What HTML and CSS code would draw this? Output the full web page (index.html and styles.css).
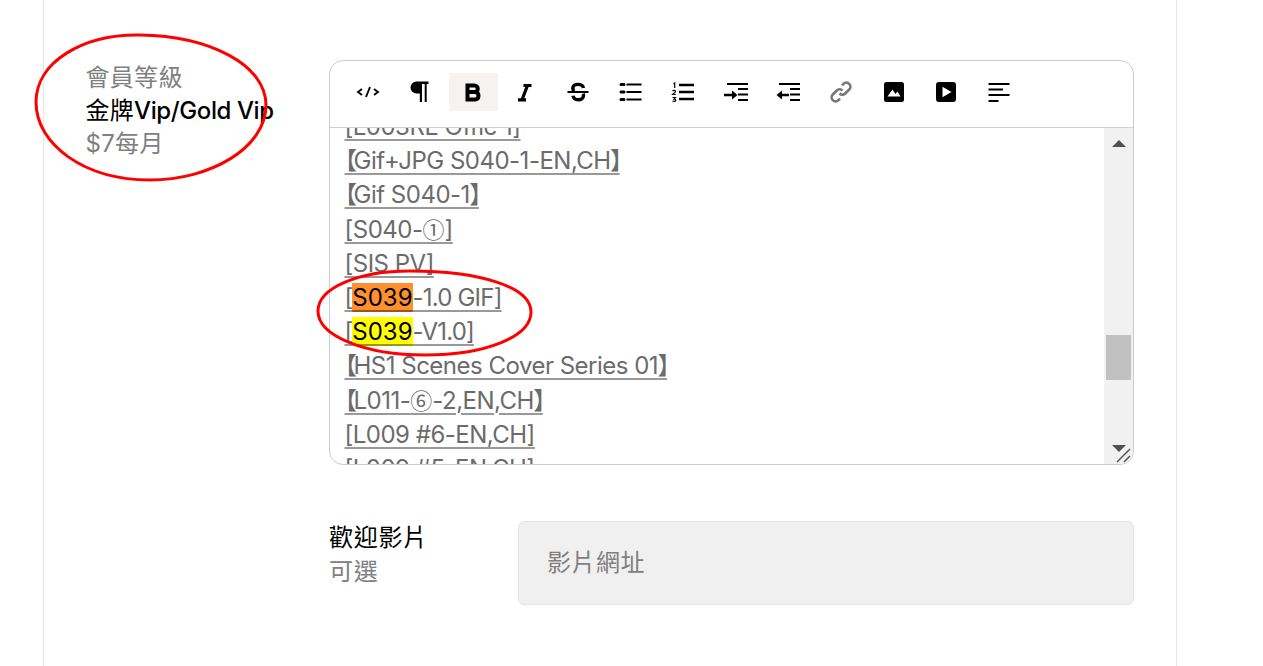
FILE: index.html
```html
<!DOCTYPE html>
<html lang="zh-Hant">
<head>
<meta charset="utf-8">
<title>會員等級</title>
<link rel="stylesheet" href="styles.css">
</head>
<body>
<main class="panel">
  <section class="tier-row">
    <div class="tier">
      <div class="muted">會員等級</div>
      <div class="strong">金牌<span class="latin">Vip/Gold Vip</span></div>
      <div class="muted">$7每月</div>
    </div>
    <div class="fields">
      <div class="editor">
        <div class="toolbar">
          <button class="tool"><svg viewBox="0 0 24 24" class="sk"><path d="M6 9l-4 3 4 3M18 9l4 3-4 3M14 7l-4 10" stroke-width="1.9"/></svg></button>
          <button class="tool"><svg viewBox="0 0 24 24" class="fl"><path d="M8.500 1.500H20.500V4H18.700V22H16.700V4H14V22H11.800V13.500H8.500A6 6 0 0 1 8.500 1.500Z"/></svg></button>
          <button class="tool active"><svg viewBox="0 0 24 24" class="sk"><path d="M6.500 5.500h7a3.200 3.200 0 0 1 0 6.500H6.500zM6.500 12h7.800a3.800 3.800 0 0 1 0 7.500H6.500z" stroke-width="4"/></svg></button>
          <button class="tool"><svg viewBox="0 0 24 24" class="sk"><path d="M10.500 5.500h8M5 19.800h8M14.500 5.500L9 19.800" stroke-width="3.200"/></svg></button>
          <button class="tool"><svg viewBox="0 0 24 24" class="sk"><path d="M1.500 12h21" stroke-width="2.200"/><path d="M17.500 8C17 5.600 14.800 4.400 12 4.400 8.800 4.400 6.800 6 6.800 8.200c0 1.400.6 2.400 1.500 3M7 15.800c.4 2.500 2.500 4 5.200 4 3.200 0 5.300-1.700 5.300-4.200 0-.7-.1-1.200-.4-1.800" stroke-width="3.400"/></svg></button>
          <button class="tool"><svg viewBox="0 0 24 24" class="sk"><path d="M7.500 4.500h15M7.500 12h15M7.500 19.500h15" stroke-width="2.200"/><path d="M2 4.500h3M2 12h3M2 19.500h3" stroke-width="3" stroke-linecap="round"/></svg></button>
          <button class="tool"><svg viewBox="0 0 24 24" class="sk"><path d="M8 5h15M8 12h15M8 19h15" stroke-width="2.400"/><path d="M2.500 4l1.200-1v5M1.500 11c1-1 3-.6 3 .5 0 1-2 1.800-3 3h3.200M1.500 17.500h3l-1.500 1.700c1.500 0 1.800.8 1.800 1.300 0 1.200-2.500 1.200-3.300.4" stroke-width="1.200"/></svg></button>
          <button class="tool"><svg viewBox="0 0 24 24" class="sk"><path d="M3 4h21M14 9h10M14 14.500h10M14 20h10" stroke-width="2.100"/><path d="M0 15h9" stroke-width="2.400"/><path class="fl" d="M8 10.500L13.500 15 8 19.500Z" stroke="none"/></svg></button>
          <button class="tool"><svg viewBox="0 0 24 24" class="sk"><path d="M3 4h21M14 9h10M14 14.500h10M14 20h10" stroke-width="2.100"/><path d="M5 15h8" stroke-width="2.400"/><path class="fl" d="M6 10.500L.5 15 6 19.500Z" stroke="none"/></svg></button>
          <button class="tool"><svg viewBox="0 0 24 24" class="sk link"><path d="M10.500 13.500a4 4 0 0 0 5.700 0l4-4a4 4 0 0 0-5.700-5.700l-1.500 1.500M13.500 10.500a4 4 0 0 0-5.700 0l-4 4a4 4 0 0 0 5.700 5.700l1.500-1.500" stroke-width="2.600"/></svg></button>
          <button class="tool"><svg viewBox="0 0 24 24" class="fl"><path fill-rule="evenodd" d="M4.500 2h15A2.500 2.500 0 0 1 22 4.500v15a2.500 2.500 0 0 1-2.500 2.500h-15A2.500 2.500 0 0 1 2 19.500v-15A2.500 2.500 0 0 1 4.500 2ZM5.500 16.500H18.500L15.500 11.500 13.500 14 10.500 9.500Z"/></svg></button>
          <button class="tool"><svg viewBox="0 0 24 24" class="fl"><path fill-rule="evenodd" d="M5 2h14a3 3 0 0 1 3 3v14a3 3 0 0 1-3 3H5a3 3 0 0 1-3-3V5a3 3 0 0 1 3-3ZM8.500 6.800V17.200L17.500 12Z"/></svg></button>
          <button class="tool"><svg viewBox="0 0 24 24" class="sk"><path d="M1.500 4h21M1.500 9.500h14.500M1.500 15h21M1.500 21h10" stroke-width="2.200"/></svg></button>
        </div>
        <div class="body">
          <div class="viewport">
            <div class="content">
              <p><u>[L003RE Offic 1]</u></p>
              <p><u><span class="br">【</span>Gif+JPG S040-1-EN,CH<span class="br">】</span></u></p>
              <p><u><span class="br">【</span>Gif S040-1<span class="br">】</span></u></p>
              <p><u>[S040-<span class="circled">①</span>]</u></p>
              <p><u>[SIS PV]</u></p>
              <p><u><span class="open">[</span><mark class="orange">S039</mark><span class="tight">-1.0 GIF]</span></u></p>
              <p><u><span class="open">[</span><mark class="yellow">S039</mark><span class="tight">-V1.0]</span></u></p>
              <p><u><span class="br">【</span>HS1 Scenes Cover Series 01<span class="br">】</span></u></p>
              <p><u><span class="br">【</span>L011-<span class="circled">⑥</span>-2,EN,CH<span class="br">】</span></u></p>
              <p><u>[L009 #6-EN,CH]</u></p>
              <p><u>[L009 #5-EN,CH]</u></p>
            </div>
          </div>
          <div class="scrollbar">
            <span class="arrow up"></span>
            <span class="thumb"></span>
            <span class="arrow down"></span>
          </div>
          <svg class="grip" viewBox="0 0 18 18"><path d="M2 16L15 3M9 16L15 10" stroke="#555" stroke-width="1.500" fill="none"/></svg>
        </div>
      </div>
      <div class="video-row">
        <div class="video-label">
          <div class="strong">歡迎影片</div>
          <div class="muted">可選</div>
        </div>
        <div class="video-input">影片網址</div>
      </div>
    </div>
  </section>
</main>
<svg class="marks" viewBox="0 0 1263 666">
  <path d="M36 102C36 62 83 34 140 35 210 36 266 65 266 105 266 148 210 180 150 180 85 180 36 145 36 102Z"/>
  <path d="M318 311C318 288 358 271 410 271 480 271 531 287 531 312 531 337 485 355 425 355 365 355 318 336 318 311Z"/>
</svg>
</body>
</html>
```

FILE: styles.css
```css
* { box-sizing: border-box; }
html, body { margin: 0; height: 100%; overflow: hidden; background: #fff; }
body {
  font-family: Inter, "Noto Sans CJK TC", sans-serif;
  font-size: 24px;
  color: #000;
}
.panel {
  width: 1134px;
  height: 666px;
  margin-left: 43px;
  border-left: 1px solid #e6e6e6;
  border-right: 1px solid #e6e6e6;
  padding: 60px 42px 0 41.500px;
}
.tier-row { display: flex; }
.tier { width: 243.500px; flex: none; line-height: 33px; padding-top: 1px; white-space: nowrap; letter-spacing: .3px; }
.latin { letter-spacing: -.4px; font-weight: 500; }
.muted { color: #808080; }
.strong { color: #000; }
.fields { width: 805px; flex: none; }
.editor {
  height: 405px;
  border: 1px solid #ccc;
  border-radius: 14px;
  display: flex;
  flex-direction: column;
  overflow: hidden;
}
.toolbar {
  height: 67px;
  flex: none;
  display: flex;
  align-items: center;
  gap: 3.600px;
  padding: 0 0 5px 13.700px;
  border-bottom: 1px solid #d0d0d0;
}
.tool {
  width: 49px;
  height: 38px;
  flex: none;
  padding: 0;
  border: 0;
  background: transparent;
  display: flex;
  align-items: center;
  justify-content: center;
}
.tool.active { background: #f5f2f0; }
.tool svg { width: 24px; height: 24px; overflow: visible; margin-left: -1px; }
.sk { fill: none; stroke: #000; }
.fl { fill: #000; }
.link { stroke: #777; }
.body { flex: 1; min-height: 0; display: flex; position: relative; }
.viewport { flex: 1; min-width: 0; overflow: hidden; }
.content { margin-top: -18px; padding-left: 14.500px; }
.content p {
  margin: 0;
  line-height: 34.200px;
  white-space: nowrap;
  color: #6b6b6b;
  letter-spacing: -.5px;
  font-feature-settings: "palt";
}
.content u {
  text-decoration: underline 2px rgba(0, 0, 0, .4);
  text-underline-offset: 4px;
}
.br { letter-spacing: -3px; }
.open { letter-spacing: -1px; }
.tight { letter-spacing: -.8px; }
.circled { font-family: "Noto Sans CJK TC", sans-serif; font-size: 22px; letter-spacing: 0; line-height: 0; }
mark { color: #000; letter-spacing: 0; }
.orange { background: #ff8f2f; }
.yellow { background: #ff0; }
.scrollbar {
  width: 29px;
  flex: none;
  background: #f1f1f1;
  display: flex;
  flex-direction: column;
  align-items: center;
  padding: 12px 0 0;
}
.arrow { width: 0; height: 0; border-left: 7px solid transparent; border-right: 7px solid transparent; }
.arrow.up { border-bottom: 7px solid #505050; }
.arrow.down { border-top: 7px solid #505050; margin-top: 65px; }
.thumb { width: 25px; height: 45px; background: #c1c1c1; margin-top: 188px; }
.grip { position: absolute; right: 0; bottom: 0; width: 18px; height: 18px; }
.video-row { display: flex; margin-top: 56px; }
.video-label { width: 189px; flex: none; line-height: 34px; letter-spacing: .7px; }
.video-input {
  flex: 1;
  height: 84px;
  background: #f0f0f0;
  border: 1px solid #e6e6e6;
  border-radius: 6px;
  padding-left: 28px;
  line-height: 82px;
  letter-spacing: .5px;
  color: #808080;
}
.marks {
  position: absolute;
  left: 0;
  top: 0;
  width: 1263px;
  height: 666px;
  pointer-events: none;
}
.marks path { fill: none; stroke: #f00; stroke-width: 3; }
```
